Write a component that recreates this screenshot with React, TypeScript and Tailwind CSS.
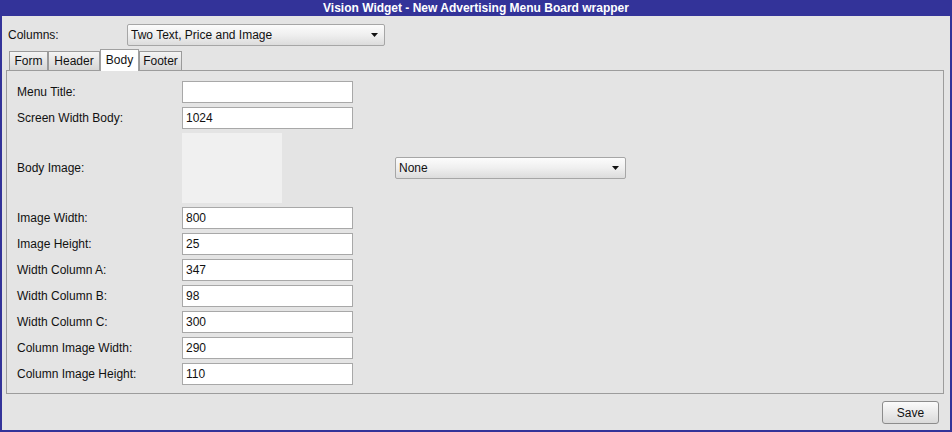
import React from "react";

const font = { fontFamily: '"Liberation Sans", Arial, sans-serif' };

function Arrow() {
  return (
    <svg width="8" height="5" viewBox="0 0 8 5" className="shrink-0">
      <path d="M0 0 H7 L3.5 4 Z" fill="#111" />
    </svg>
  );
}

function Select({ value, className }: { value: string; className: string }) {
  return (
    <div
      className={`flex items-center justify-between rounded-[2px] border border-[#a6a6a6] bg-gradient-to-b from-[#fcfcfc] via-[#efefef] to-[#dcdcdc] pl-[3px] pr-[5px] text-[12px] text-[#111] ${className}`}
    >
      <span>{value}</span>
      <Arrow />
    </div>
  );
}

function Field({ label, value }: { label: string; value: string }) {
  return (
    <div className="flex h-[22px] items-center">
      <div className="w-[165px] text-[12px] text-[#111]">{label}</div>
      <div className="flex h-[22px] w-[171px] items-center border border-[#a8a8a8] bg-white px-[3px] text-[12px] text-[#111]">
        {value}
      </div>
    </div>
  );
}

export default function App() {
  const tabs = [
    { name: "Form", w: "w-[39px]" },
    { name: "Header", w: "w-[52px]" },
    { name: "Body", w: "w-[39px]" },
    { name: "Footer", w: "w-[43px]" },
  ];
  return (
    <div style={font} className="flex h-[432px] w-[952px] flex-col bg-[#333399]">
      <div className="h-4 text-center text-[12px] font-bold leading-4 text-white">
        Vision Widget - New Advertising Menu Board wrapper
      </div>
      <div className="mx-[2px] mb-[2px] flex flex-1 flex-col bg-[#e4e4e4]">
        <div className="flex items-center pl-[6px] pt-[8px]">
          <div className="w-[119px] text-[12px] text-[#111]">Columns:</div>
          <Select value="Two Text, Price and Image" className="h-[22px] w-[258px]" />
        </div>
        <div className="ml-[5px] flex h-[24px] items-end pl-[2px]">
          {tabs.map((t) =>
            t.name === "Body" ? (
              <div
                key={t.name}
                className={`relative z-10 -mb-px flex h-[22px] ${t.w} items-start justify-center border border-b-0 border-[#a0a0a0] bg-white pt-[1px] text-[12px] text-[#111]`}
              >
                {t.name}
              </div>
            ) : (
              <div
                key={t.name}
                className={`flex h-[19px] ${t.w} items-center justify-center border border-b-0 border-[#9a9a9a] bg-gradient-to-b from-[#f4f4f4] to-[#d6d6d6] text-[12px] text-[#111]`}
              >
                {t.name}
              </div>
            )
          )}
        </div>
        <div className="ml-[4px] mr-[6px] flex flex-col gap-[4px] border border-[#9c9c9c] pb-[8px] pl-[10px] pt-[10px]">
          <Field label="Menu Title:" value="" />
          <Field label="Screen Width Body:" value="1024" />
          <div className="flex h-[70px] items-center">
            <div className="w-[165px] text-[12px] text-[#111]">Body Image:</div>
            <div className="h-[70px] w-[100px] bg-[#f0f0f0]" />
            <Select value="None" className="ml-[113px] h-[22px] w-[231px]" />
          </div>
          <Field label="Image Width:" value="800" />
          <Field label="Image Height:" value="25" />
          <Field label="Width Column A:" value="347" />
          <Field label="Width Column B:" value="98" />
          <Field label="Width Column C:" value="300" />
          <Field label="Column Image Width:" value="290" />
          <Field label="Column Image Height:" value="110" />
        </div>
        <div className="flex flex-1 items-start justify-end pr-[11px] pt-[7px]">
          <div className="flex h-[23px] w-[57px] items-center justify-center rounded-[3px] border border-[#8c8c8c] bg-gradient-to-b from-[#fbfbfb] to-[#dadada] text-[12px] text-[#111]">
            Save
          </div>
        </div>
      </div>
    </div>
  );
}
